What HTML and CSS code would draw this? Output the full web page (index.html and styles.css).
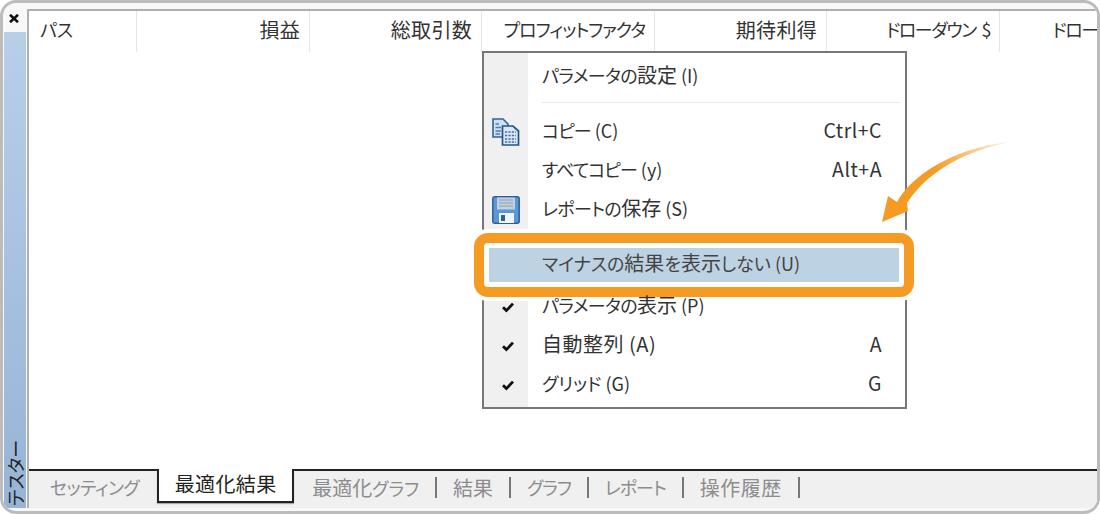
FILE: index.html
```html
<!DOCTYPE html>
<html lang="ja">
<head>
    <meta charset="UTF-8">
    <meta name="viewport" content="width=device-width, initial-scale=1.0">
    <title>テスター</title>
    <link rel="stylesheet" href="styles.css">
</head>
<body>
    <svg class="defs" width="0" height="0">
        <symbol id="check" viewBox="0 0 12 12">
            <path d="M1 6.2 L4.4 9.6 L11 2.6" fill="none" stroke="#111" stroke-width="2.8"/>
        </symbol>
        <linearGradient id="arrowFade" gradientUnits="userSpaceOnUse" x1="140" y1="-4" x2="30" y2="60">
            <stop offset="0" stop-color="#f59a23" stop-opacity="0"/>
            <stop offset="0.72" stop-color="#f59a23"/>
        </linearGradient>
    </svg>

    <div class="frame">
        <div class="side">
            <svg class="close" viewBox="0 0 10 9" width="10" height="9">
                <path d="M1 0.8 L9 8.2 M9 0.8 L1 8.2" stroke="#111" stroke-width="2.6"/>
            </svg>
            <div class="side-title"><span>テスター</span></div>
        </div>

        <div class="main">
            <div class="table-head">
                <div class="col left">パス</div>
                <div class="col k">損益</div>
                <div class="col k">総取引数</div>
                <div class="col t">プロフィットファクタ</div>
                <div class="col k">期待利得</div>
                <div class="col t gap">ドローダウン $</div>
                <div class="col t gap">ドローダウン %</div>
            </div>
            <div class="table-body"></div>
            <div class="tabs">
                <span class="tab first">セッティング</span>
                <span class="tab active k">最適化結果</span>
                <span class="tab"><span class="k">最適化</span>グラフ</span>
                <i class="tab-sep"></i>
                <span class="tab k">結果</span>
                <i class="tab-sep"></i>
                <span class="tab t">グラフ</span>
                <i class="tab-sep"></i>
                <span class="tab t">レポート</span>
                <i class="tab-sep"></i>
                <span class="tab k wide">操作履歴</span>
                <i class="tab-sep"></i>
            </div>
        </div>

        <!-- 右クリックメニュー -->
        <div class="menu">
            <div class="menu-item"><span class="menu-icon"></span><span class="menu-label"><span class="t2">パラメータの</span><span class="k">設定</span> (I)</span></div>
            <div class="menu-sep"></div>
            <div class="menu-item">
                <span class="menu-icon">
                    <svg viewBox="0 0 28 28" width="28" height="28">
                        <path d="M1 1 H11 L16 6 V19 H1 Z" fill="#d3e0f0" stroke="#2f6199" stroke-width="1.6"/>
                        <path d="M3.5 6 H7 M3.5 9.5 H9 M3.5 13 H9 M3.5 16 H8" stroke="#4d7db5" stroke-width="1.5"/>
                        <path d="M10.5 8 H21 L26.5 13 V27 H10.5 Z" fill="#dbe6f4" stroke="#23548f" stroke-width="1.7"/>
                        <path d="M13 14 H24 M13 17.5 H24 M13 21 H24 M13 24 H24" stroke="#3f72ad" stroke-width="1.6" stroke-dasharray="2.2 1.2"/>
                    </svg>
                </span>
                <span class="menu-label"><span class="t">コピー</span> (C)</span><span class="menu-key">Ctrl+C</span>
            </div>
            <div class="menu-item"><span class="menu-icon"></span><span class="menu-label"><span class="t">すべてコピー</span> (y)</span><span class="menu-key">Alt+A</span></div>
            <div class="menu-item">
                <span class="menu-icon">
                    <svg viewBox="0 0 28 28" width="28" height="28">
                        <rect x="0.8" y="0.8" width="26.4" height="26.4" rx="2" fill="#5a97d6" stroke="#2c5f9e" stroke-width="1.5"/>
                        <rect x="5" y="1.5" width="18" height="12" fill="#c3d0dd"/>
                        <path d="M7 4 H21 M7 7 H21 M7 10 H21" stroke="#9fb0c2" stroke-width="1.4"/>
                        <rect x="7" y="17" width="15" height="10" fill="#f1f5f9"/>
                        <rect x="9" y="19" width="4" height="6" fill="#2c5f9e"/>
                    </svg>
                </span>
                <span class="menu-label"><span class="t2">レポートの</span><span class="k">保存</span> (S)</span>
            </div>
            <div class="menu-sep"></div>
            <div class="menu-item picked">
                <span class="menu-icon"></span><span class="menu-label">マイナスの<span class="k">結果</span>を<span class="k">表示</span>しない (U)</span>
            </div>
            <div class="menu-item"><span class="menu-icon"><svg class="check"><use href="#check"/></svg></span><span class="menu-label"><span class="t2">パラメータの</span><span class="k">表示</span> (P)</span></div>
            <div class="menu-item"><span class="menu-icon"><svg class="check"><use href="#check"/></svg></span><span class="menu-label"><span class="k wide">自動整列 (A)</span></span><span class="menu-key">A</span></div>
            <div class="menu-item"><span class="menu-icon"><svg class="check"><use href="#check"/></svg></span><span class="menu-label">グリッド (G)</span><span class="menu-key">G</span></div>
        </div>

        <svg class="arrow" viewBox="0 0 140 90" width="140" height="90">
            <path d="M2 82 L8 56 L17 62 C30 38 70 8 130 2 C90 10 50 28 27 63 L28 71 Z" fill="url(#arrowFade)"/>
        </svg>
    </div>
</body>
</html>
```

FILE: styles.css
```css
body {
    margin: 0;
    background: #fff;
    font-family: "Noto Sans CJK JP", sans-serif;
    font-feature-settings: "palt";
    color: #333;
}
.defs {
    position: absolute;
}
.k {
    font-size: 20px;
}
.wide {
    letter-spacing: 0.5px;
}
.t {
    letter-spacing: -1px;
}
.t2 {
    letter-spacing: -0.6px;
}
.frame {
    position: relative;
    display: flex;
    box-sizing: border-box;
    width: 1100px;
    height: 514px;
    padding: 6px 0 3px 0;
    border: 3px solid #bcbcbc;
    border-radius: 16px;
    background: #f8f8f8;
    overflow: hidden;
}

/* 左のタイトル帯 */
.side {
    display: flex;
    flex-direction: column;
    width: 24px;
    flex: none;
}
.close {
    display: block;
    margin: 5px 0 9px 6px;
}
.side-title {
    flex: 1;
    display: flex;
    align-items: flex-end;
    justify-content: center;
    background: linear-gradient(#b7cfe9, #97b4d6);
    margin: 0 1px;
}
.side-title span {
    writing-mode: vertical-rl;
    text-orientation: sideways;
    transform: rotate(180deg);
    font-size: 18px;
    line-height: 22px;
    padding-top: 2px;
    color: #222;
}

.main {
    flex: 1;
    display: flex;
    flex-direction: column;
    min-width: 0;
    border-top: 2px solid #b0b0b0;
    border-left: 2px solid #b0b0b0;
    background: #fff;
}

/* 表のヘッダー */
.table-head {
    display: grid;
    grid-template-columns: 108px 173px 172px 173px 172px 173px 173px;
    height: 41px;
    overflow: hidden;
    flex: none;
}
.col {
    box-sizing: border-box;
    padding-right: 9px;
    border-right: 1px solid #e6e6e6;
    font-size: 18px;
    line-height: 37px;
    text-align: right;
    white-space: nowrap;
}
.col.k {
    font-size: 20px;
    letter-spacing: 0.3px;
}
.col.gap {
    word-spacing: 3px;
    letter-spacing: -1.4px;
}
.col.left {
    padding-left: 11px;
    text-align: left;
}
.table-body {
    flex: 1;
}

/* 下のタブ */
.tabs {
    display: flex;
    align-items: center;
    box-sizing: border-box;
    height: 39px;
    flex: none;
    padding: 0 0 5px 21px;
    border-top: 2px solid #222;
    background: #f0f0f0;
    font-size: 18px;
    color: #8c8c8c;
}
.tab {
    white-space: nowrap;
}
.tab.first {
    letter-spacing: -0.6px;
}
.tab.active {
    display: flex;
    align-items: center;
    align-self: flex-start;
    box-sizing: border-box;
    height: 34px;
    margin: -2px 18px 0 18px;
    padding: 0 15.5px 3px;
    border: 2px solid #222;
    border-top: none;
    background: #fff;
    box-shadow: 0 1px 1px #aaa;
    color: #222;
    letter-spacing: 0.4px;
}
.tab-sep {
    width: 2px;
    height: 21px;
    margin: 0 16px;
    background: #777;
}

/* 右クリックメニュー */
.menu {
    position: absolute;
    left: 479px;
    top: 48px;
    box-sizing: border-box;
    width: 425px;
    height: 358px;
    padding-top: 4px;
    border: 2px solid #777;
    background: linear-gradient(90deg, #f0f0f0 44px, #fff 44px);
    font-size: 18px;
}
.menu-item {
    position: relative;
    display: flex;
    align-items: center;
    height: 39px;
}
.menu-icon {
    display: flex;
    align-items: center;
    justify-content: center;
    width: 44px;
    margin-right: 14px;
    flex: none;
}
.menu-label {
    position: relative;
    flex: 1;
    padding-bottom: 4px;
    white-space: nowrap;
}
.menu-key {
    position: relative;
    margin-right: 23px;
    padding-bottom: 4px;
    font-size: 19.5px;
    line-height: 26px;
    letter-spacing: 0.5px;
}
.menu-sep {
    height: 16px;
    margin-left: 58px;
    margin-right: 5px;
    background: linear-gradient(#eaeaea, #eaeaea) no-repeat 0 6px / 100% 1px;
}
.check {
    width: 12px;
    height: 12px;
    margin-left: 3px;
}

/* 強調の枠 */
.menu-item.picked {
    margin-bottom: 3px;
}
.menu-item.picked::before {
    content: "";
    position: absolute;
    left: -10px;
    right: -9px;
    top: -12px;
    bottom: -13px;
    box-sizing: border-box;
    border: 10px solid #f59a23;
    border-radius: 14px;
    background: linear-gradient(#bdd2e2, #bdd2e2) no-repeat 5px 5px / calc(100% - 10px) calc(100% - 10px), #fff;
    box-shadow: 0 0 0 4px #fff;
}
.menu-item.picked .menu-label {
    color: #444;
}

.arrow {
    position: absolute;
    left: 877px;
    top: 137px;
}
```
